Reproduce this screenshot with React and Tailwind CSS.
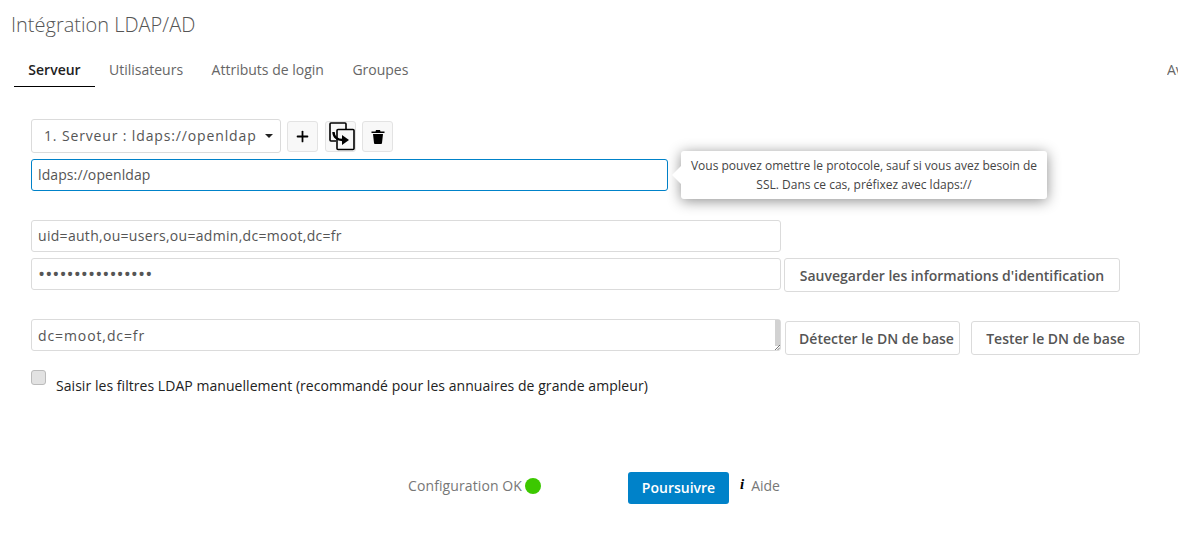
import { Plus } from "lucide-react";

const inputClass = "h-[32px] rounded-[3px] border bg-white px-[6px] text-[#555] outline-none";
const buttonClass = "h-[34px] rounded-[3px] border border-[#dbdbdb] bg-white text-[14px] font-semibold text-[#555]";
const iconButtonClass = "flex h-[31px] w-[31px] items-center justify-center rounded-[3px] border border-[#e3e3e3] bg-[#f8f8f8] text-black";

function CopyIcon() {
    return (
        <svg width="28" height="30" viewBox="0 0 28 30" fill="none" stroke="black" strokeWidth="1.6">
            <path d="M9 20H4a1 1 0 0 1-1-1V3a1 1 0 0 1 1-1h14a1 1 0 0 1 1 1v6" />
            <rect x="10" y="8.5" width="17" height="20" rx="1" />
            <path d="M6.5 11c0 5 4 8 9 8" strokeWidth="2.4" />
            <path d="M15 14l7 5-7 5z" fill="black" stroke="none" />
        </svg>
    );
}

function TrashIcon() {
    return (
        <svg width="14" height="15" viewBox="0 0 14 15" fill="black">
            <path d="M0.5 2.5h4l0.5-1.5h4l0.5 1.5h4V4h-13z" />
            <path d="M2 5h10l-1 9a1 1 0 0 1-1 1H4a1 1 0 0 1-1-1z" />
        </svg>
    );
}

export default function App() {
    const tabs = ["Utilisateurs", "Attributs de login", "Groupes"];

    return (
        <div className="relative h-[544px] w-[1178px] overflow-hidden bg-white font-['Open_Sans',sans-serif] text-[#555]">
            <h1 className="pl-[11px] pt-[11px] text-[20px] leading-[28px] font-light text-[#555]">Intégration LDAP/AD</h1>

            <div className="mt-[14px] flex h-[34px] pl-[14px] text-[14px]">
                <div className="h-[34px] w-[81px] border-b border-black pt-[6px] text-center font-semibold text-[#222]">Serveur</div>
                <div className="flex gap-[28.5px] pl-[14px] pt-[6px] text-[#666]">
                    {tabs.map(tab => <span key={tab}>{tab}</span>)}
                </div>
                <span className="ml-auto w-[11px] shrink-0 overflow-hidden pt-[6px] whitespace-nowrap text-[#666]">Av</span>
            </div>

            <div className="pl-[31px] pt-[32px]">
                <div className="flex items-center">
                    <div className="flex h-[34px] w-[250px] items-center justify-between rounded-[3px] border border-[#dbdbdb] pb-[1px] pl-[12px] pr-[7px] text-[14px] tracking-[0.86px] text-[#555]">
                        <span className="whitespace-nowrap">1. Serveur : ldaps://openldap</span>
                        <span className="h-0 w-0 border-x-[4px] border-t-[4px] border-x-transparent border-t-[#222]"></span>
                    </div>
                    <div className="ml-[6px] flex">
                        <div className={iconButtonClass}><Plus size={17} strokeWidth={2.5} /></div>
                        <div className={iconButtonClass + " ml-[7px] overflow-visible"}><CopyIcon /></div>
                        <div className={iconButtonClass + " ml-[6px]"}><TrashIcon /></div>
                    </div>
                </div>

                <input readOnly value="ldaps://openldap" className={inputClass + " mt-[6px] block w-[637px] border-[#0082c9] pb-[2px] text-[14px] tracking-[0.1px]"} />

                <input readOnly value="uid=auth,ou=users,ou=admin,dc=moot,dc=fr" className={inputClass + " mt-[29px] block w-[750px] border-[#dbdbdb] pb-[1px] text-[14px] tracking-[0.3px]"} />

                <div className="mt-[6px] flex items-start gap-[3px]">
                    <input readOnly type="password" value="aaaaaaaaaaaaaaaa" className={inputClass + " w-[750px] border-[#dbdbdb] text-[19px]"} />
                    <button className={buttonClass + " w-[336px] pt-[1px]"}>Sauvegarder les informations d'identification</button>
                </div>

                <div className="mt-[27px] flex items-start gap-[3px]">
                    <div className={inputClass + " relative flex w-[750px] items-center justify-between border-[#dbdbdb] pr-0 text-[14px] tracking-[0.9px]"}>
                        <span>dc=moot,dc=fr</span>
                        <span className="h-[26px] w-[5px] self-start bg-[#d2d2d2]"></span>
                        <svg className="absolute bottom-0 right-0" width="5" height="5" viewBox="0 0 5 5" stroke="#555" strokeWidth="0.8">
                            <path d="M0 5L5 0M2.5 5L5 2.5" />
                        </svg>
                    </div>
                    <div className="ml-[1px] mt-[2px] flex gap-[11px]">
                        <button className={buttonClass + " w-[175px] pl-[8px]"}>Détecter le DN de base</button>
                        <button className={buttonClass + " w-[169px]"}>Tester le DN de base</button>
                    </div>
                </div>

                <div className="mt-[15px] flex items-start">
                    <span className="h-[15px] w-[15px] rounded-[3px] border border-[#bbb] bg-[#e2e2e2]"></span>
                    <span className="ml-[10px] mt-[7px] text-[14px] leading-[18px] tracking-[0.05px] text-[#222]">Saisir les filtres LDAP manuellement (recommandé pour les annuaires de grande ampleur)</span>
                </div>
            </div>

            <div className="mt-[77px] flex items-start pl-[408px]">
                <span className="mt-[4px] text-[14px] leading-[20px] tracking-[0.1px] text-[#777]">Configuration OK</span>
                <span className="ml-[3px] mt-[6px] h-[16px] w-[16px] rounded-full bg-[#3cc800]"></span>
                <button className="ml-[87px] h-[32px] w-[101px] rounded-[3px] bg-[#0082c9] pb-[2px] text-[14px] font-semibold text-white">Poursuivre</button>
                <span className="ml-[11px] mt-[2px] font-['Liberation_Serif',serif] text-[15px] font-bold italic leading-[20px] text-black">i</span>
                <span className="ml-[7px] mt-[4px] text-[14px] leading-[20px] text-[#777]">Aide</span>
            </div>

            <div className="absolute left-[681px] top-[151px] w-[366px] rounded-[3px] bg-white px-[6px] py-[5px] text-center text-[12px] leading-[19px] text-[#444] shadow-[0_2px_14px_rgba(0,0,0,0.45)]">
                <span className="absolute -left-[9px] top-[15px] h-0 w-0 border-y-[9px] border-r-[9px] border-y-transparent border-r-white"></span>
                Vous pouvez omettre le protocole, sauf si vous avez besoin de SSL. Dans ce cas, préfixez avec ldaps://
            </div>
        </div>
    );
}
